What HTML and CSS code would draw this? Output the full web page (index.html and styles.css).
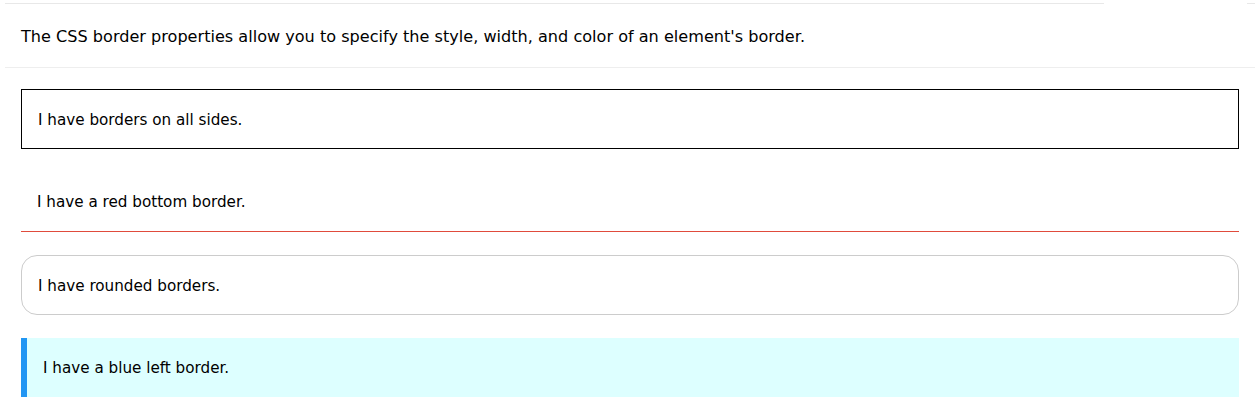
FILE: index.html
```html
<!DOCTYPE html>
<html>
<head>
<meta charset="utf-8">
<link rel="stylesheet" href="styles.css">
</head>
<body>
<div class="page">
  <div class="topline"><span class="seg-main"></span><span class="seg-end"></span></div>
  <div class="intro">
    <p>The CSS border properties allow you to specify the style, width, and color of an element's border.</p>
  </div>
  <div class="examples">
    <div class="box box-all">I have borders on all sides.</div>
    <div class="box box-bottom">I have a red bottom border.</div>
    <div class="box box-round">I have rounded borders.</div>
    <div class="box box-left">I have a blue left border.</div>
  </div>
</div>
</body>
</html>
```
FILE: styles.css
```css
html, body {
  margin: 0;
  padding: 0;
  background: #fff;
}
body {
  font-family: "DejaVu Sans", Verdana, sans-serif;
  color: #000;
}
.page {
  padding-top: 3px;
}
.topline {
  display: flex;
  height: 1px;
  margin-left: 5px;
  width: 1250px;
}
.seg-main {
  width: 1099px;
  background: #e8e8e8;
}
.seg-end {
  width: 8px;
  margin-left: auto;
  background: #e8e8e8;
}
.intro {
  margin-left: 5px;
  width: 1250px;
  height: 64px;
  border-bottom: 1px solid #eee;
  display: flex;
  align-items: center;
  padding-left: 16px;
  padding-top: 2px;
  box-sizing: border-box;
}
.intro p {
  margin: 0;
  font-size: 16.1px;
  line-height: 22px;
}
.examples {
  display: flex;
  flex-direction: column;
  gap: 23px;
  margin: 21px 21px 0 21px;
  width: 1218px;
}
.box {
  box-sizing: border-box;
  height: 60px;
  padding: 0 16px;
  display: flex;
  align-items: center;
  font-size: 15.2px;
}
.box-all {
  border: 1px solid #000;
  padding-top: 2px;
}
.box-bottom {
  border-bottom: 1px solid #e04b3c;
}
.box-round {
  border: 1px solid #ccc;
  border-radius: 16px;
  padding-top: 2px;
}
.box-left {
  border-left: 6px solid #2196f3;
  background: #ddffff;
  height: 59px;
}
```
